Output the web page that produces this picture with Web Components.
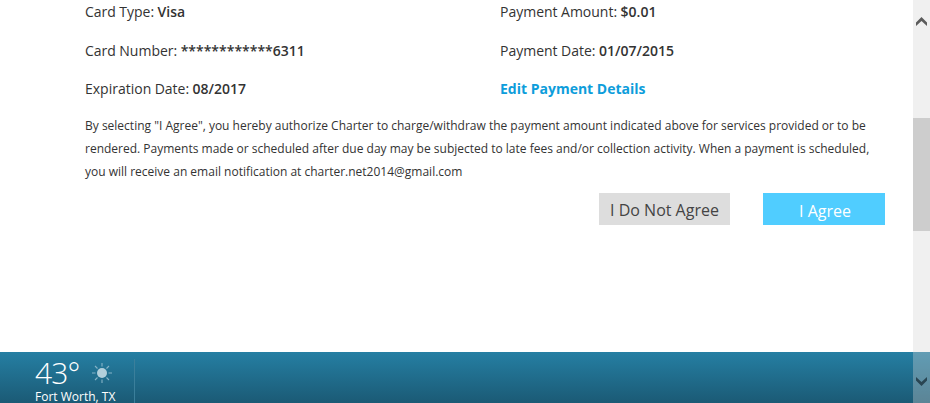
<!DOCTYPE html>
<html lang="en">
<head>
<meta charset="utf-8">
<title>Payment confirmation</title>
<style>
html,body{margin:0;height:403px;overflow:hidden;background:#fff}
body{font-family:"Open Sans","Noto Sans",sans-serif;color:#333}
</style>
</head>
<body>
<payment-page></payment-page>
<script>
const define = (name, html) => {
  const t = document.createElement('template');
  t.innerHTML = html;
  customElements.define(name, class extends HTMLElement {
    constructor() {
      super();
      this.attachShadow({mode: 'open'}).appendChild(t.content.cloneNode(true));
    }
  });
};

define('detail-row', `
<style>
:host{display:block;font-size:14px;line-height:20px;white-space:nowrap;word-spacing:-.2px}
slot[name=value]{font-weight:600}
</style><slot></slot> <slot name="value"></slot>`);

define('edit-link', `
<style>
:host{display:block;font-size:14px;line-height:20px;white-space:nowrap}
a{color:#0d9ddb;font-weight:700;text-decoration:none}
</style><a href="#"><slot></slot></a>`);

define('action-button', `
<style>
:host{display:block}
button{display:block;box-sizing:border-box;width:100%;height:32px;border:0;margin:0;padding:var(--drop,2px) 0 0 var(--shift,0px);
  background:var(--bg);color:var(--fg);font:16px/30px "Open Sans",sans-serif;text-align:center;white-space:nowrap}
</style><button><slot></slot></button>`);

define('legal-note', `
<style>
:host{display:block;font-size:12px;line-height:23px;white-space:nowrap}
::slotted(span){display:block}
</style><slot></slot>`);

define('weather-bar', `
<style>
:host{display:flex;box-sizing:border-box;height:51px;padding-left:35px;background:linear-gradient(#257fa3,#1b5a75);color:#fff;overflow:hidden}
section{display:flex;flex-direction:column;width:99px;padding-top:6px}
.top{display:flex;flex:none;height:30px}
.temp{width:57px;font-size:30px;font-weight:300;line-height:29px;letter-spacing:-.9px}
.city{flex:none;font-size:12px;line-height:14px;padding-top:2px;white-space:nowrap}
svg{display:block;margin-top:5px}
i{width:1px;height:44px;margin-top:7px;background:#3b7f9b}
</style>
<section><div class="top"><span class="temp"><slot name="temp"></slot></span>
<svg width="20" height="20" viewBox="0 0 20 20"><circle cx="10" cy="10" r="5" fill="#b2cfdb"/>
<path d="M10 0v3.500M10 16.500v3.500M0 10h3.500M16.500 10h3.500M3 3l2.500 2.500M14.500 14.500l2.500 2.500M17 3l-2.500 2.500M5.500 14.500l-2.500 2.500" stroke="#86b3c7" stroke-width="1.100"/></svg></div>
<div class="city"><slot></slot></div></section><i></i>`);

define('scroll-bar', `
<style>
:host{display:grid;grid-template-rows:118px 113px 172px;background:rgba(212,212,212,.35)}
.thumb{background:#cdcdcd}
svg{display:block}
.up{margin:17px 0 0 3px}
.down{align-self:end;margin:0 0 17px 3px}
</style>
<svg class="up" width="11" height="9" viewBox="0 0 11 9"><path d="M0 5.500L5.500 0 11 5.500V9L5.500 4 0 9Z" fill="#5c5c5c"/></svg>
<div class="thumb"></div>
<svg class="down" width="11" height="9" viewBox="0 0 11 9"><path d="M0 0L5.500 5 11 0V3.500L5.500 9 0 3.500Z" fill="#294552"/></svg>`);

define('payment-page', `
<style>
:host{display:grid;width:930px;height:403px;grid-template:352px 51px / 913px 17px;overflow:hidden}
main{grid-area:1/1;padding:2px 28px 0 85px}
.details{display:grid;grid-template-columns:415px 1fr;grid-template-rows:39px 38px 35px}
.actions{display:flex;justify-content:flex-end;gap:33px;margin-top:10px}
.no{width:131px;--bg:#ddd;--fg:#444}
.yes{width:122px;--bg:#50cdff;--fg:#fff;--drop:3px;--shift:2px}
weather-bar{grid-area:2/1/3/3}
scroll-bar{grid-area:1/2/3/3}
</style>
<main>
<div class="details">
<detail-row>Card Type:<span slot="value">Visa</span></detail-row>
<detail-row>Payment Amount:<span slot="value">$0.01</span></detail-row>
<detail-row>Card Number:<span slot="value">************6311</span></detail-row>
<detail-row>Payment Date:<span slot="value">01/07/2015</span></detail-row>
<detail-row>Expiration Date:<span slot="value">08/2017</span></detail-row>
<edit-link>Edit Payment Details</edit-link>
</div>
<legal-note>
<span>By selecting "I Agree", you hereby authorize Charter to charge/withdraw the payment amount indicated above for services provided or to be</span>
<span>rendered. Payments made or scheduled after due day may be subjected to late fees and/or collection activity. When a payment is scheduled,</span>
<span>you will receive an email notification at charter.net2014@gmail.com</span>
</legal-note>
<div class="actions"><action-button class="no">I Do Not Agree</action-button><action-button class="yes">I Agree</action-button></div>
</main>
<weather-bar><span slot="temp">43°</span>Fort Worth, TX</weather-bar>
<scroll-bar></scroll-bar>`);
</script>
</body>
</html>
